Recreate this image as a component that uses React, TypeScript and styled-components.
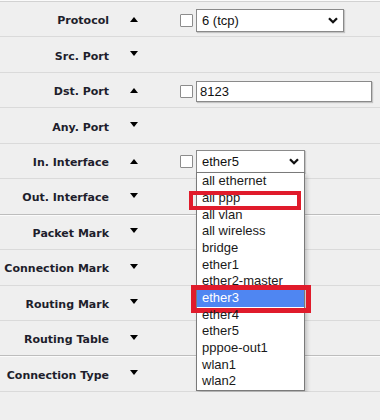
import React from 'react'
import styled, { createGlobalStyle } from 'styled-components'

const GlobalStyle = createGlobalStyle`
    body {
        margin: 0;
        background: #efefef;
    }
`

type Field = {
    label: string
    open?: boolean
    section?: boolean
    control?: 'protocol' | 'port' | 'interface'
}

const fields: Field[] = [
    { label: 'Protocol', open: true, control: 'protocol' },
    { label: 'Src. Port' },
    { label: 'Dst. Port', open: true, control: 'port' },
    { label: 'Any. Port' },
    { label: 'In. Interface', open: true, control: 'interface' },
    { label: 'Out. Interface', section: true },
    { label: 'Packet Mark' },
    { label: 'Connection Mark' },
    { label: 'Routing Mark' },
    { label: 'Routing Table', section: true },
    { label: 'Connection Type' },
]

const interfaces = [
    'all ethernet',
    'all ppp',
    'all vlan',
    'all wireless',
    'bridge',
    'ether1',
    'ether2-master',
    'ether3',
    'ether4',
    'ether5',
    'pppoe-out1',
    'wlan1',
    'wlan2',
]

const marked: Record<string, 'thin' | 'thick'> = { 'all ppp': 'thin', ether3: 'thick' }

function Chevron(): JSX.Element {
    return (
        <svg width="10" height="7" viewBox="0 0 10 7">
            <path d="M1 1.2 L5 5.2 L9 1.2" fill="none" stroke="#111" strokeWidth="2.3" />
        </svg>
    )
}

function Control({ kind }: { kind: Field['control'] }): JSX.Element | null {
    if (kind === 'protocol')
        return (
            <StyledControl>
                <Check />
                <Select width={148}>
                    <span>6 (tcp)</span>
                    <Chevron />
                </Select>
            </StyledControl>
        )
    if (kind === 'port')
        return (
            <StyledControl>
                <Check />
                <TextInput>8123</TextInput>
            </StyledControl>
        )
    if (kind === 'interface')
        return (
            <StyledControl>
                <Check />
                <Select width={109}>
                    <span>ether5</span>
                    <Chevron />
                    <OptionList>
                        {interfaces.map(name => (
                            <Option key={name} selected={name === 'ether3'}>
                                {name}
                                {marked[name] && <Marker thick={marked[name] === 'thick'} />}
                            </Option>
                        ))}
                    </OptionList>
                </Select>
            </StyledControl>
        )
    return null
}

export default function App(): JSX.Element {
    return (
        <>
            <GlobalStyle />
            <StyledForm>
                {fields.map(field => (
                    <Row key={field.label} section={field.section}>
                        <Label>{field.label}</Label>
                        <ArrowCell>
                            <Triangle up={field.open} />
                        </ArrowCell>
                        <Control kind={field.control} />
                    </Row>
                ))}
            </StyledForm>
        </>
    )
}

const StyledForm = styled.div`
    border-top: 1px solid #d2d2d2;
    box-shadow: 0 -1px 0 #fafafa;
    margin-top: 1px;
    display: flex;
    flex-direction: column;
    position: relative;
`

const Row = styled.div<{ section?: boolean }>`
    display: grid;
    grid-template-columns: 110px 70px 1fr;
    align-items: center;
    height: 35.45px;
    box-sizing: border-box;
    padding-top: 2px;
    border-bottom: 1px solid ${p => (p.section ? '#bdbdbd' : '#dadada')};
    box-shadow: ${p => (p.section ? '0 1px 0 #fbfbfb' : 'none')};
`

const Label = styled.div`
    text-align: right;
    padding-right: 1px;
    padding-top: 1px;
    font-family: 'DejaVu Sans', Verdana, sans-serif;
    font-weight: bold;
    font-size: 11px;
    color: #1e1e2c;
    white-space: nowrap;
`

const ArrowCell = styled.div`
    display: flex;
    align-items: center;
    padding-left: 20px;
`

const Triangle = styled.span<{ up?: boolean }>`
    width: 0;
    height: 0;
    border-left: 4.5px solid transparent;
    border-right: 4.5px solid transparent;
    ${p => (p.up ? 'border-bottom: 5px solid #000;' : 'border-top: 5px solid #000;')}
    margin-top: ${p => (p.up ? '-1px' : '-4px')};
`

const StyledControl = styled.div`
    display: flex;
    align-items: center;
`

const Check = styled.span`
    width: 13px;
    height: 13px;
    box-sizing: border-box;
    margin-right: 3px;
    background: #fff;
    border: 1px solid #8c8c8c;
    border-radius: 1px;
`

const Select = styled.div<{ width: number }>`
    position: relative;
    width: ${p => p.width}px;
    height: 23px;
    box-sizing: border-box;
    display: flex;
    align-items: center;
    justify-content: space-between;
    padding: 0 5px 0 5px;
    background: #fff;
    border: 1px solid #8a8a8a;
    box-shadow: 1px 1px 1px rgba(0, 0, 0, 0.18);
    font-family: 'Liberation Sans', Arial, sans-serif;
    font-size: 13px;
    color: #111;
`

const TextInput = styled.div`
    width: 176px;
    height: 21px;
    box-sizing: border-box;
    display: flex;
    align-items: center;
    padding-left: 3px;
    background: #fff;
    border: 1px solid #8a8a8a;
    box-shadow: 1px 1px 1px rgba(0, 0, 0, 0.18);
    font-family: 'Liberation Sans', Arial, sans-serif;
    font-size: 13px;
    color: #111;
`

const OptionList = styled.div`
    position: absolute;
    top: 100%;
    left: -1px;
    width: 109px;
    box-sizing: border-box;
    background: #fff;
    border: 1px solid #7a7a7a;
    box-shadow: 2px 3px 4px rgba(0, 0, 0, 0.2);
    z-index: 2;
`

const Option = styled.div<{ selected?: boolean }>`
    position: relative;
    height: 16.65px;
    line-height: 16.65px;
    padding-left: 5px;
    white-space: nowrap;
    font-family: 'Liberation Sans', Arial, sans-serif;
    font-size: 13px;
    color: ${p => (p.selected ? '#fff' : '#1a1a1a')};
    background: ${p => (p.selected ? '#4f86f2' : 'transparent')};
`

const Marker = styled.span<{ thick?: boolean }>`
    position: absolute;
    border: ${p => (p.thick ? '5px' : '4px')} solid #e01b2b;
    ${p =>
        p.thick
            ? 'top: -5px; bottom: -6px; left: -6px; right: -7px;'
            : 'top: 1px; bottom: -3px; left: -8px; right: 3px;'}
`
